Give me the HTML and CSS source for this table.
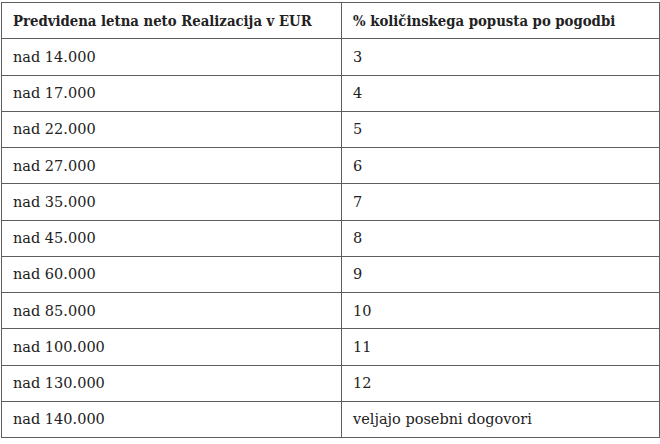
FILE: index.html
```html
<!DOCTYPE html>
<html lang="sl">
<head>
<meta charset="utf-8">
<link rel="stylesheet" href="styles.css">
</head>
<body>
<table class="rates">
  <thead>
    <tr><th>Predvidena letna neto Realizacija v EUR</th><th>% količinskega popusta po pogodbi</th></tr>
  </thead>
  <tbody>
    <tr><td>nad 14.000</td><td>3</td></tr>
    <tr><td>nad 17.000</td><td>4</td></tr>
    <tr><td>nad 22.000</td><td>5</td></tr>
    <tr><td>nad 27.000</td><td>6</td></tr>
    <tr><td>nad 35.000</td><td>7</td></tr>
    <tr><td>nad 45.000</td><td>8</td></tr>
    <tr><td>nad 60.000</td><td>9</td></tr>
    <tr><td>nad 85.000</td><td>10</td></tr>
    <tr><td>nad 100.000</td><td>11</td></tr>
    <tr><td>nad 130.000</td><td>12</td></tr>
    <tr><td>nad 140.000</td><td>veljajo posebni dogovori</td></tr>
  </tbody>
</table>
</body>
</html>
```
FILE: styles.css
```css
html, body {
  margin: 0;
  padding: 0;
  background: #fff;
}
body {
  padding: 2px 0 0 1px;
  font-family: "DejaVu Serif", "Liberation Serif", serif;
  color: #222;
}
.rates {
  border-collapse: collapse;
  width: 659px;
  table-layout: fixed;
}
.rates th,
.rates td {
  border: 1px solid #5e5e5e;
  height: 36.25px;
  padding: 0 0 0 11px;
  text-align: left;
  vertical-align: middle;
  font-size: 14.5px;
  box-sizing: border-box;
  line-height: 18px;
  white-space: nowrap;
}
.rates th:first-child,
.rates td:first-child {
  width: 340px;
}
.rates th {
  font-weight: bold;
  font-size: 14.75px;
  font-stretch: condensed;
}
.rates td {
  font-weight: normal;
}
```
